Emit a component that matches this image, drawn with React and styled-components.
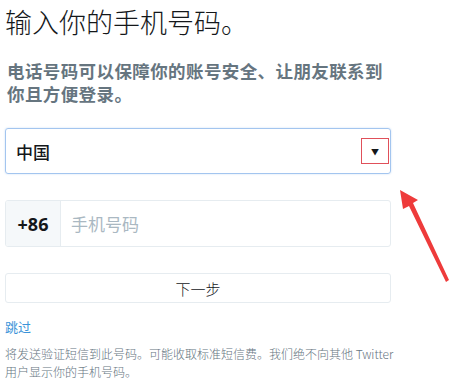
import React from "react";
import styled, { createGlobalStyle } from "styled-components";

const GlobalStyle = createGlobalStyle`
  html, body {
    margin: 0;
    padding: 0;
    background: #ffffff;
  }
  body {
    font-family: "Noto Sans CJK SC", "Noto Sans", sans-serif;
    overflow: hidden;
  }
`;

const Page = styled.div`
  position: relative;
  width: 452px;
  padding: 3px 61px 0 5px;
  box-sizing: border-box;
  display: flex;
  flex-direction: column;
  align-items: stretch;
`;

const Title = styled.h1`
  margin: 0;
  font-size: 27px;
  font-weight: 300;
  line-height: 38px;
  color: #14171a;
`;

const Subtitle = styled.p`
  margin: 18px 0 0 2px;
  font-size: 17.5px;
  font-weight: 700;
  line-height: 23px;
  color: #66757f;
  letter-spacing: 0.4px;
`;

const SelectBox = styled.div`
  margin-top: 23px;
  height: 46px;
  flex: none;
  box-sizing: border-box;
  border: 1px solid #a3c5ef;
  border-radius: 3px;
  display: flex;
  align-items: center;
  justify-content: space-between;
  padding: 0 10px 0 10px;
  box-shadow: 0 0 2px rgba(120, 170, 230, 0.4);
`;

const SelectText = styled.span`
  font-size: 17px;
  font-weight: 500;
  color: #14171a;
`;

const Caret = styled.span`
  position: relative;
  width: 10px;
  height: 10px;
  display: flex;
  align-items: center;
  justify-content: center;
  font-size: 8px;
  color: #14171a;
`;

const Highlight = styled.span`
  position: absolute;
  left: -9px;
  top: -8px;
  width: 28px;
  height: 26px;
  box-sizing: border-box;
  border: 1px solid #e0505a;
`;

const PhoneRow = styled.div`
  margin-top: 26px;
  height: 47px;
  flex: none;
  box-sizing: border-box;
  border: 1px solid #e6ecf0;
  border-radius: 3px;
  display: flex;
  overflow: hidden;
`;

const Prefix = styled.div`
  width: 54px;
  background: #f5f8fa;
  border-right: 1px solid #e6ecf0;
  display: flex;
  align-items: center;
  justify-content: center;
  font-family: "Noto Sans", sans-serif;
  font-size: 18px;
  font-weight: 700;
  color: #14171a;
`;

const Placeholder = styled.div`
  flex: 1;
  display: flex;
  align-items: center;
  padding-left: 10px;
  font-size: 17px;
  color: #aab8c2;
`;

const NextButton = styled.div`
  margin-top: 26px;
  height: 30px;
  flex: none;
  box-sizing: border-box;
  border: 1px solid #e6ecf0;
  border-radius: 3px;
  display: flex;
  align-items: center;
  justify-content: center;
  font-size: 15px;
  font-weight: 300;
  color: #14171a;
`;

const SkipLink = styled.a`
  margin-top: 15px;
  font-size: 13px;
  line-height: 18px;
  color: #3b94d9;
  text-decoration: none;
`;

const Notice = styled.p`
  margin: 9px 0 0 0;
  font-size: 12px;
  line-height: 18px;
  color: #66757f;
  font-weight: 300;
  white-space: nowrap;
`;

const Arrow = styled.svg`
  position: absolute;
  left: 392px;
  top: 182px;
`;

export default function App() {
  return (
    <>
      <GlobalStyle />
      <Page>
        <Title>输入你的手机号码。</Title>
        <Subtitle>
          电话号码可以保障你的账号安全、让朋友联系到
          <br />
          你且方便登录。
        </Subtitle>
        <SelectBox>
          <SelectText>中国</SelectText>
          <Caret>
            ▼
            <Highlight />
          </Caret>
        </SelectBox>
        <PhoneRow>
          <Prefix>+86</Prefix>
          <Placeholder>手机号码</Placeholder>
        </PhoneRow>
        <NextButton>下一步</NextButton>
        <SkipLink href="#">跳过</SkipLink>
        <Notice>
          将发送验证短信到此号码。可能收取标准短信费。我们绝不向其他 Twitter
          <br />
          用户显示你的手机号码。
        </Notice>
      </Page>
      <Arrow width="60" height="105" viewBox="0 0 60 105">
        <path
          d="M8 8 L26 18 L21 21 L57 98 L54 100 L17 24 L11 27 Z"
          fill="#ee3b3b"
        />
      </Arrow>
    </>
  );
}
